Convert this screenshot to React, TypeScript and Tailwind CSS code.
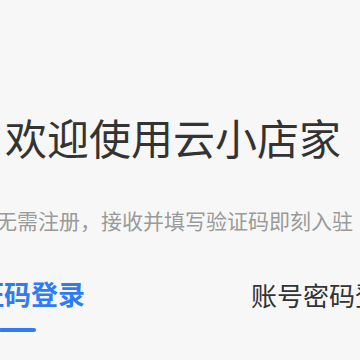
import React from "react";

export default function App() {
  const font = { fontFamily: '"Noto Sans CJK SC", "Noto Sans", sans-serif' };
  return (
    <div
      className="w-[360px] h-[360px] overflow-hidden bg-[#f7f7f7] flex flex-col"
      style={font}
    >
      <div className="mt-[116px] ml-[5px] whitespace-nowrap text-[42px] leading-[42px] text-[#333333]">
        欢迎使用云小店家
      </div>
      <div className="mt-[52px] ml-[-4px] whitespace-nowrap text-[21px] leading-[21px] text-[#9a9a9a]">
        无需注册，接收并填写验证码即刻入驻
      </div>
      <div className="mt-[48px] flex items-start whitespace-nowrap">
        <div className="ml-[-50px] flex flex-col items-start">
          <div className="mt-[1px] text-[27px] leading-[28px] font-bold text-[#2f7bf5]">验证码登录</div>
          <div className="mt-[20px] ml-[49px] w-[37px] h-[4px] rounded-full bg-[#2f7bf5]" />
        </div>
        <div className="ml-[166px] mt-[2px] text-[26px] leading-[28px] text-[#333333]">账号密码登录</div>
      </div>
    </div>
  );
}
